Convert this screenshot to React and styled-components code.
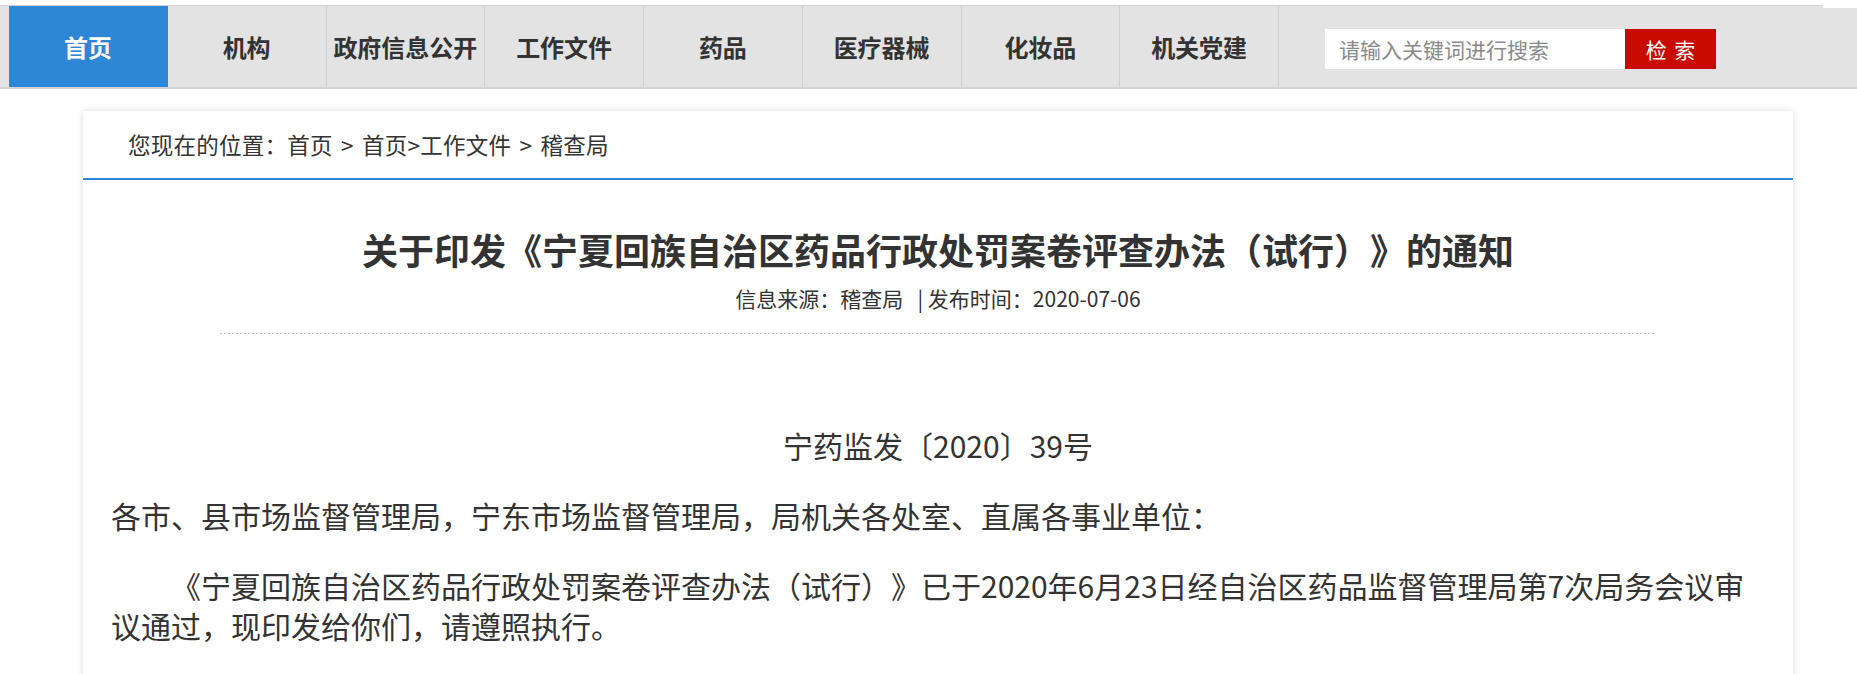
import React from "react";
import styled, { createGlobalStyle } from "styled-components";

const GlobalStyle = createGlobalStyle`
    body {
        margin: 0;
        background: #fff;
        color: #333;
        font-family: "Microsoft YaHei", "Noto Sans CJK SC", sans-serif;
        text-spacing-trim: space-all;
    }
`;

const navItems = ["首页", "机构", "政府信息公开", "工作文件", "药品", "医疗器械", "化妆品", "机关党建"];

const App = () => {
    return (
        <>
            <GlobalStyle />
            <NavBar>
                <NavList>
                    {navItems.map((item, i) => (
                        <NavItem key={item} active={i === 0}>
                            {item}
                        </NavItem>
                    ))}
                </NavList>
                <SearchBox>
                    <SearchInput placeholder="请输入关键词进行搜索" />
                    <SearchButton>检 索</SearchButton>
                </SearchBox>
            </NavBar>

            <Card>
                <Breadcrumb>您现在的位置：首页 &gt; 首页&gt;工作文件 &gt; 稽查局</Breadcrumb>
                <Article>
                    <Title>关于印发《宁夏回族自治区药品行政处罚案卷评查办法（试行）》的通知</Title>
                    <Meta>信息来源：稽查局 &nbsp;&nbsp;| 发布时间：2020-07-06</Meta>
                    <Divider />
                    <Body>
                        <DocNo>宁药监发〔2020〕39号</DocNo>
                        <Paragraph>各市、县市场监督管理局，宁东市场监督管理局，局机关各处室、直属各事业单位：</Paragraph>
                        <Paragraph indent>
                            《宁夏回族自治区药品行政处罚案卷评查办法（试行）》已于2020年6月23日经自治区药品监督管理局第7次局务会议审议通过，现印发给你们，请遵照执行。
                        </Paragraph>
                    </Body>
                </Article>
            </Card>
        </>
    );
};

export default App;

const NavBar = styled.div`
    position: relative;
    margin-top: 5px;
    display: flex;
    height: 81px;
    padding-left: 9px;
    background: #e3e3e3;
    border-top: 1px solid #d2d2d2;
    border-bottom: 2px solid #d4d4d4;

    &::after {
        content: "";
        position: absolute;
        top: -1px;
        right: 0;
        width: 34px;
        height: 3px;
        background: #fff;
    }
`;

const NavList = styled.ul`
    display: flex;
    margin: 0;
    padding: 0;
    list-style: none;
`;

const NavItem = styled.li`
    box-sizing: border-box;
    width: 158.75px;
    height: 81px;
    display: flex;
    align-items: center;
    justify-content: center;
    border-right: 1px solid ${({ active }) => (active ? "#2e86d6" : "#d0d0d0")};
    background: ${({ active }) => (active ? "#2e86d6" : "transparent")};
    color: ${({ active }) => (active ? "#fff" : "#333")};
    font-size: 24px;
    font-weight: bold;
    white-space: nowrap;
`;

const SearchBox = styled.div`
    display: flex;
    margin: 23px 0 0 46px;
    height: 40px;
`;

const SearchInput = styled.input`
    box-sizing: border-box;
    width: 300px;
    height: 40px;
    border: 0;
    outline: 0;
    padding: 0 14px;
    background: #fff;
    font-family: inherit;
    font-size: 21px;
    color: #333;

    &::placeholder {
        color: #8a8a8a;
    }
`;

const SearchButton = styled.button`
    width: 91px;
    height: 40px;
    border: 0;
    padding: 0;
    background: #c80a00;
    color: #fff;
    font-family: inherit;
    font-size: 21px;
    word-spacing: 3px;
    cursor: pointer;
`;

const Card = styled.div`
    width: 1710px;
    margin: 22px 0 0 83px;
    background: #fff;
    box-shadow: 0 0 7px rgba(0, 0, 0, 0.14);
`;

const Breadcrumb = styled.div`
    height: 67px;
    line-height: 67px;
    padding-left: 45px;
    font-size: 22.5px;
    letter-spacing: 0.25px;
    word-spacing: 3px;
    color: #333;
    border-bottom: 2px solid #2e86d6;
`;

const Article = styled.div`
    padding: 0 28px;
`;

const Title = styled.h1`
    margin: 42px 0 0;
    font-size: 36px;
    line-height: 54px;
    font-weight: bold;
    text-align: center;
    color: #333;
`;

const Meta = styled.div`
    margin-top: 7px;
    font-size: 21px;
    line-height: 30px;
    text-align: center;
    color: #333;
`;

const Divider = styled.div`
    width: 1436px;
    height: 1px;
    margin: 20px auto 0;
    background: repeating-linear-gradient(to right, #c2c2c2 0 2px, transparent 2px 4px);
`;

const Body = styled.div`
    padding-top: 91px;
    padding-bottom: 60px;
    font-size: 30px;
    line-height: 40px;
    color: #333;
`;

const DocNo = styled.p`
    margin: 0;
    text-align: center;
`;

const Paragraph = styled.p`
    margin: 30px 0 0;
    text-indent: ${({ indent }) => (indent ? "2em" : "0")};
`;
